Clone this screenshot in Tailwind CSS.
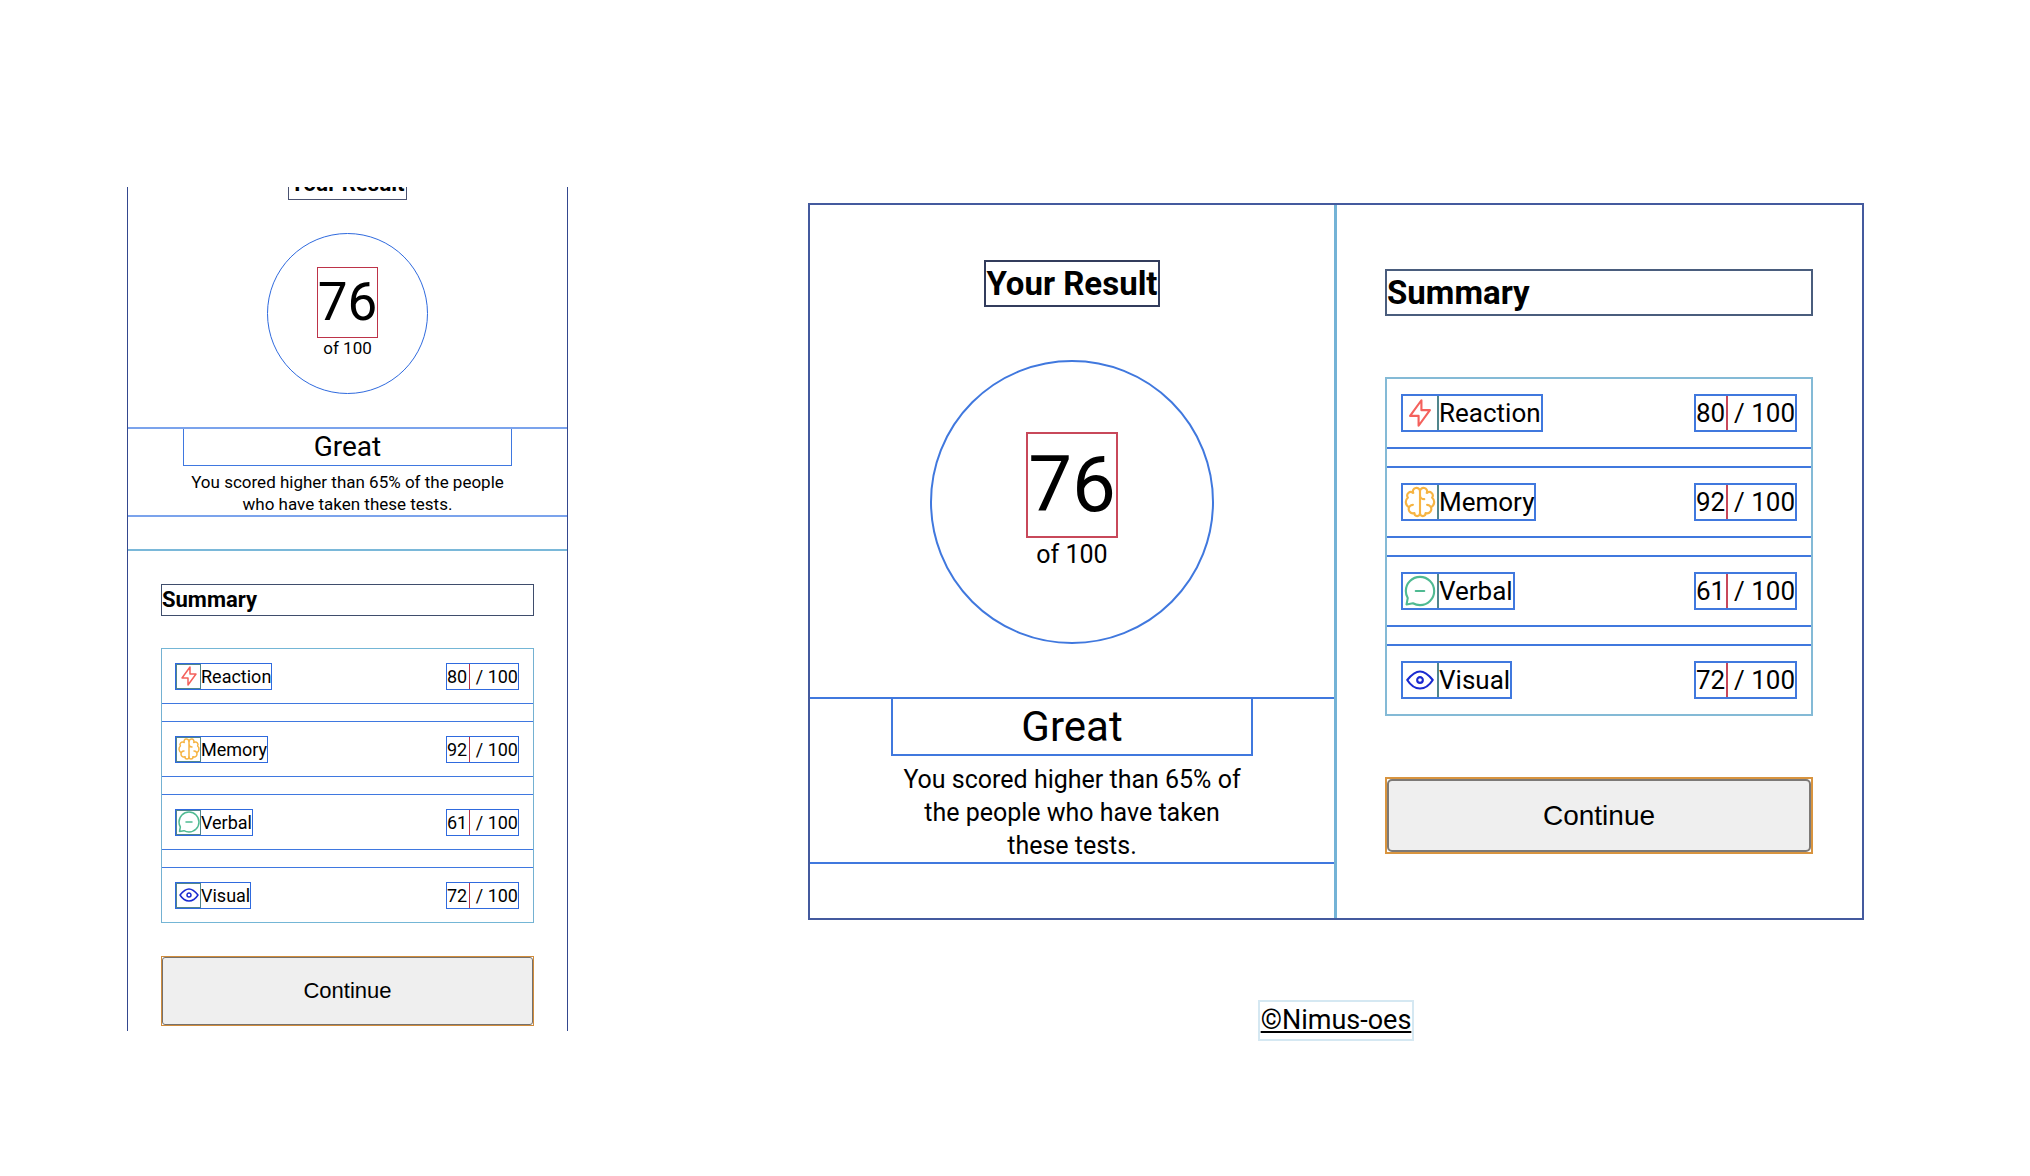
<!DOCTYPE html>
<html lang="en">
<head>
<meta charset="utf-8">
<meta name="viewport" content="width=device-width, initial-scale=1">
<title>Results summary</title>
<script src="https://cdn.jsdelivr.net/npm/@tailwindcss/browser@4"></script>
</head>
<body class="bg-white font-[Roboto,sans-serif] font-normal text-black">

<!-- Shared icon definitions -->
<svg class="hidden" aria-hidden="true">
  <symbol id="reaction" viewBox="0 0 20 20" fill="none" stroke="#f4615c" stroke-width="1.25" stroke-linecap="round" stroke-linejoin="round">
    <path d="M10.833 8.333V2.5l-6.666 9.167h5V17.5l6.666-9.167h-5Z"/>
  </symbol>
  <symbol id="memory" viewBox="0 0 20 20" fill="none" stroke="#f6b443" stroke-width="1.25" stroke-linecap="round" stroke-linejoin="round">
    <path d="M5.833 11.667a2.5 2.5 0 1 0 .834 4.858"/>
    <path d="M3.553 13.004a3.333 3.333 0 0 1-.728-5.53m.025-.067a2.083 2.083 0 0 1 2.983-2.824m.199.054A2.083 2.083 0 1 1 10 3.75v12.917a1.667 1.667 0 0 1-3.333 0M10 5.833a2.5 2.5 0 0 0 2.5 2.5m1.667 3.334a2.5 2.5 0 1 1-.834 4.858"/>
    <path d="M16.447 13.004a3.334 3.334 0 0 0 .728-5.53m-.025-.067a2.083 2.083 0 0 0-2.983-2.824M10 3.75a2.085 2.085 0 0 1 2.538-2.033 2.084 2.084 0 0 1 1.43 2.92m-.635 12.03a1.667 1.667 0 0 1-3.333 0"/>
  </symbol>
  <symbol id="verbal" viewBox="0 0 20 20" fill="none" stroke="#4fba92" stroke-width="1.25" stroke-linecap="round" stroke-linejoin="round">
    <path d="M7.5 10h5M10 18.333A8.333 8.333 0 1 0 1.667 10c0 1.518.406 2.942 1.115 4.167l-.699 3.75 3.75-.699A8.295 8.295 0 0 0 10 18.333Z"/>
  </symbol>
  <symbol id="visual" viewBox="0 0 20 20" fill="none" stroke="#1a2bd0" stroke-width="1.25" stroke-linecap="round" stroke-linejoin="round">
    <path d="M10 11.667a1.667 1.667 0 1 0 0-3.334 1.667 1.667 0 0 0 0 3.334Z"/>
    <path d="M17.5 10c-1.574 2.492-4.402 5-7.5 5s-5.926-2.508-7.5-5C4.416 7.632 6.66 5 10 5s5.584 2.632 7.5 5Z"/>
  </symbol>
</svg>

<main class="grid grid-cols-[441fr_1056fr] items-start gap-x-[240px] pl-[127px] pr-[166px]">

  <!-- Narrow layout -->
  <section class="mt-[187px] overflow-hidden border-x border-[#34488f] pb-[5px]">
    <div class="flex flex-col items-center">
      <h2 class="-mt-[19px] h-8 border border-[#4a5270] px-px text-[22px] leading-[30px] font-bold whitespace-nowrap">Your Result</h2>
      <div class="mt-[33px] flex size-[161px] flex-col items-center justify-center rounded-full border border-[#2f6ade] pb-0.5">
        <span class="border border-[#bd3349] text-[53px] leading-[69px]">76</span>
        <span class="text-[17px] leading-5">of 100</span>
      </div>
      <div class="mt-[33px] w-full border-y-2 border-[#7ba3ec] text-center">
        <h3 class="mx-auto h-[37px] w-3/4 border-x border-b border-[#3f78e0] text-[28px] leading-9">Great</h3>
        <p class="mx-auto mt-[5px] w-3/4 text-[17px] leading-[22px]">You scored higher than 65% of the people who have taken these tests.</p>
      </div>
    </div>
    <div class="mt-8 border-t-2 border-[#7ab8d9] px-[33px] pt-[33px]">
      <h2 class="h-8 border border-[#3f4d6c] text-[22px] leading-[30px] font-bold">Summary</h2>
      <ul class="mt-8 flex flex-col gap-[17px] border-x border-[#74b1d2] text-[18px] leading-[25px]">
        <li class="flex h-14 items-center justify-between border-t border-b border-t-[#74b6d6] border-b-[#3f78e0] pr-[14px] pl-[13px]">
          <span class="flex h-[27px] items-center border border-[#2f6ade]"><span class="flex size-[25px] items-center justify-center border border-[#50858c]"><svg class="size-6 shrink-0" aria-hidden="true"><use href="#reaction"/></svg></span>Reaction</span>
          <span class="flex h-[27px] w-[73px] border border-[#2f6ade]"><span class="w-[23px] border-r border-[#bd3349]">80</span><span class="flex-1 text-right">/ 100</span></span>
        </li>
        <li class="flex h-14 items-center justify-between border-y border-[#3f78e0] pr-[14px] pl-[13px]">
          <span class="flex h-[27px] items-center border border-[#2f6ade]"><span class="flex size-[25px] items-center justify-center border border-[#50858c]"><svg class="size-6 shrink-0" aria-hidden="true"><use href="#memory"/></svg></span>Memory</span>
          <span class="flex h-[27px] w-[73px] border border-[#2f6ade]"><span class="w-[23px] border-r border-[#bd3349]">92</span><span class="flex-1 text-right">/ 100</span></span>
        </li>
        <li class="flex h-14 items-center justify-between border-y border-[#3f78e0] pr-[14px] pl-[13px]">
          <span class="flex h-[27px] items-center border border-[#2f6ade]"><span class="flex size-[25px] items-center justify-center border border-[#50858c]"><svg class="size-6 shrink-0" aria-hidden="true"><use href="#verbal"/></svg></span>Verbal</span>
          <span class="flex h-[27px] w-[73px] border border-[#2f6ade]"><span class="w-[23px] border-r border-[#bd3349]">61</span><span class="flex-1 text-right">/ 100</span></span>
        </li>
        <li class="flex h-14 items-center justify-between border-t border-b border-t-[#3f78e0] border-b-[#74b6d6] pr-[14px] pl-[13px]">
          <span class="flex h-[27px] items-center border border-[#2f6ade]"><span class="flex size-[25px] items-center justify-center border border-[#50858c]"><svg class="size-6 shrink-0" aria-hidden="true"><use href="#visual"/></svg></span>Visual</span>
          <span class="flex h-[27px] w-[73px] border border-[#2f6ade]"><span class="w-[23px] border-r border-[#bd3349]">72</span><span class="flex-1 text-right">/ 100</span></span>
        </li>
      </ul>
      <button type="button" class="mt-[33px] block w-full border border-[#d08c3c] font-['Liberation_Sans',sans-serif] text-[22px] leading-[66px]">
        <span class="block rounded-[3px] border border-[#76716c] bg-[#efefef]">Continue</span>
      </button>
    </div>
  </section>

  <!-- Wide layout -->
  <div class="mt-[203px] flex flex-col items-center">
    <section class="grid w-full grid-cols-[524fr_528fr] border-2 border-[#445a9e]">
      <div class="flex flex-col items-center pt-[55px] pb-[54px]">
        <h2 class="h-[47px] border-2 border-[#323c5c] text-[33px] leading-[43px] font-bold whitespace-nowrap">Your Result</h2>
        <div class="mt-[53px] flex size-[284px] flex-col items-center justify-center rounded-full border-2 border-[#4078de] pb-0.5">
          <span class="border-2 border-[#c8485a] text-[78px] leading-[102px]">76</span>
          <span class="text-[25px] leading-[33px]">of 100</span>
        </div>
        <div class="mt-[53px] w-full border-y-2 border-[#4078de] text-center">
          <h3 class="mx-auto h-[57px] w-[69%] border-x-2 border-b-2 border-[#4078de] text-[42px] leading-[55px]">Great</h3>
          <p class="mx-auto mt-[7px] w-[69%] text-[25px] leading-[33px]">You scored higher than 65% of the people who have taken these tests.</p>
        </div>
      </div>
      <div class="border-l-[3px] border-[#74b3d6] pt-16 pr-[49px] pl-12">
        <h2 class="h-[47px] border-2 border-[#4a5d7d] text-[33px] leading-[43px] font-bold">Summary</h2>
        <ul class="mt-[61px] flex flex-col gap-[17px] border-x-2 border-[#84bad6] text-[26px] leading-[34px]">
          <li class="flex h-[72px] items-center justify-between border-t-2 border-b-2 border-t-[#84bad6] border-b-[#4078de] px-[14px]">
            <span class="flex h-[38px] items-center border-2 border-[#4078de]"><span class="flex h-full w-9 items-center justify-center border-r-2 border-[#50858c]"><svg class="size-[34px] shrink-0" aria-hidden="true"><use href="#reaction"/></svg></span>Reaction</span>
            <span class="flex h-[38px] w-[103px] border-2 border-[#4078de]"><span class="w-8 border-r-2 border-[#c8485a]">80</span><span class="flex-1 text-right">/ 100</span></span>
          </li>
          <li class="flex h-[72px] items-center justify-between border-y-2 border-[#4078de] px-[14px]">
            <span class="flex h-[38px] items-center border-2 border-[#4078de]"><span class="flex h-full w-9 items-center justify-center border-r-2 border-[#50858c]"><svg class="size-[34px] shrink-0" aria-hidden="true"><use href="#memory"/></svg></span>Memory</span>
            <span class="flex h-[38px] w-[103px] border-2 border-[#4078de]"><span class="w-8 border-r-2 border-[#c8485a]">92</span><span class="flex-1 text-right">/ 100</span></span>
          </li>
          <li class="flex h-[72px] items-center justify-between border-y-2 border-[#4078de] px-[14px]">
            <span class="flex h-[38px] items-center border-2 border-[#4078de]"><span class="flex h-full w-9 items-center justify-center border-r-2 border-[#50858c]"><svg class="size-[34px] shrink-0" aria-hidden="true"><use href="#verbal"/></svg></span>Verbal</span>
            <span class="flex h-[38px] w-[103px] border-2 border-[#4078de]"><span class="w-8 border-r-2 border-[#c8485a]">61</span><span class="flex-1 text-right">/ 100</span></span>
          </li>
          <li class="flex h-[72px] items-center justify-between border-t-2 border-b-2 border-t-[#4078de] border-b-[#84bad6] px-[14px]">
            <span class="flex h-[38px] items-center border-2 border-[#4078de]"><span class="flex h-full w-9 items-center justify-center border-r-2 border-[#50858c]"><svg class="size-[34px] shrink-0" aria-hidden="true"><use href="#visual"/></svg></span>Visual</span>
            <span class="flex h-[38px] w-[103px] border-2 border-[#4078de]"><span class="w-8 border-r-2 border-[#c8485a]">72</span><span class="flex-1 text-right">/ 100</span></span>
          </li>
        </ul>
        <button type="button" class="mt-[61px] block w-full border-2 border-[#d8943f] font-['Liberation_Sans',sans-serif] text-[28px] leading-[69px]">
          <span class="block rounded-[5px] border-2 border-[#7c7976] bg-[#efefef]">Continue</span>
        </button>
      </div>
    </section>
    <a href="#" class="mt-20 border-2 border-[#d5e8f2] px-px text-[27px] leading-[37px] underline decoration-2 underline-offset-2">©Nimus-oes</a>
  </div>
</main>
</body>
</html>
